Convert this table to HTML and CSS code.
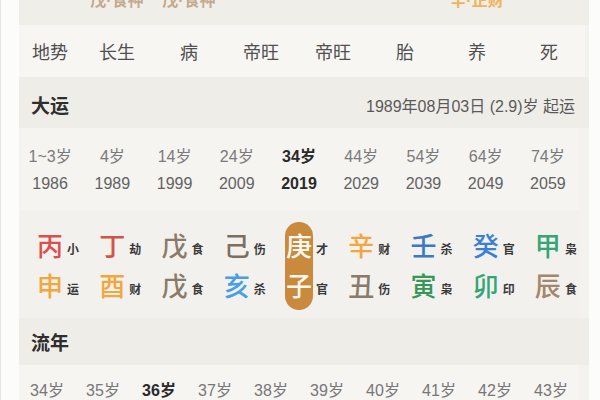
FILE: index.html
```html
<!DOCTYPE html>
<html lang="zh">
<head>
<meta charset="utf-8">
<link rel="stylesheet" href="styles.css">
</head>
<body>
<div class="page">
  <div class="panel">
    <div class="top">
      <div class="grid8 topline">
        <span></span><span class="c-tan">戊·食神</span><span class="c-tan">戊·食神</span><span></span><span></span><span></span><span class="c-gold">辛·正财</span><span></span>
      </div>
    </div>
    <div class="dishi grid8">
      <span>地势</span><span>长生</span><span>病</span><span>帝旺</span><span>帝旺</span><span>胎</span><span>养</span><span>死</span>
    </div>
    <div class="head head-dayun">
      <span class="title">大运</span>
      <span class="qiyun">1989年08月03日 (2.9)岁 起运</span>
    </div>
    <div class="years grid9">
      <div class="yc"><span class="age">1~3岁</span><span class="yr">1986</span></div>
      <div class="yc"><span class="age">4岁</span><span class="yr">1989</span></div>
      <div class="yc"><span class="age">14岁</span><span class="yr">1999</span></div>
      <div class="yc"><span class="age">24岁</span><span class="yr">2009</span></div>
      <div class="yc cur"><span class="age">34岁</span><span class="yr">2019</span></div>
      <div class="yc"><span class="age">44岁</span><span class="yr">2029</span></div>
      <div class="yc"><span class="age">54岁</span><span class="yr">2039</span></div>
      <div class="yc"><span class="age">64岁</span><span class="yr">2049</span></div>
      <div class="yc"><span class="age">74岁</span><span class="yr">2059</span></div>
    </div>
    <div class="ganzhi grid9">
      <div class="pillar"><div class="bigs"><span class="red">丙</span><span class="gold">申</span></div><div class="subs"><span>小</span><span>运</span></div></div>
      <div class="pillar"><div class="bigs"><span class="red2">丁</span><span class="gold">酉</span></div><div class="subs"><span>劫</span><span>财</span></div></div>
      <div class="pillar"><div class="bigs"><span class="brown">戊</span><span class="brown">戊</span></div><div class="subs"><span>食</span><span>食</span></div></div>
      <div class="pillar"><div class="bigs"><span class="brown2">己</span><span class="sky">亥</span></div><div class="subs"><span>伤</span><span>杀</span></div></div>
      <div class="pillar"><div class="bigs active"><span>庚</span><span>子</span></div><div class="subs"><span>才</span><span>官</span></div></div>
      <div class="pillar"><div class="bigs"><span class="gold">辛</span><span class="brown">丑</span></div><div class="subs"><span>财</span><span>伤</span></div></div>
      <div class="pillar"><div class="bigs"><span class="blue">壬</span><span class="green">寅</span></div><div class="subs"><span>杀</span><span>枭</span></div></div>
      <div class="pillar"><div class="bigs"><span class="blue2">癸</span><span class="green2">卯</span></div><div class="subs"><span>官</span><span>印</span></div></div>
      <div class="pillar"><div class="bigs"><span class="green2">甲</span><span class="tan">辰</span></div><div class="subs"><span>枭</span><span>食</span></div></div>
    </div>
    <div class="head head-liunian">
      <span class="title">流年</span>
    </div>
    <div class="liunian grid10">
      <span>34岁</span><span>35岁</span><span class="cur">36岁</span><span>37岁</span><span>38岁</span><span>39岁</span><span>40岁</span><span>41岁</span><span>42岁</span><span>43岁</span>
    </div>
  </div>
</div>
</body>
</html>
```

FILE: styles.css
```css
html, body {
  margin: 0;
  padding: 0;
  background: #fcfcfb;
  font-family: "Liberation Sans", "Noto Sans CJK SC", sans-serif;
}
.page {
  width: 600px;
  height: 400px;
  overflow: hidden;
  padding-left: 18px;
  box-sizing: border-box;
  border-left: 1px solid #e4e4e2;
}
.panel {
  width: 570px;
  height: 400px;
  overflow: hidden;
  background: #f3f2ee;
}
.grid8 {
  display: grid;
  grid-template-columns: 62px repeat(7, 1fr);
  width: 566px;
}
.grid9 {
  display: grid;
  grid-template-columns: repeat(9, 1fr);
  width: 560px;
}
.grid10 {
  display: grid;
  grid-template-columns: repeat(10, 1fr);
  width: 560px;
}
.grid8 > span, .grid10 > span {
  text-align: center;
}

/* top cut-off strip */
.top {
  height: 25px;
  overflow: hidden;
  background: #f0eee9;
}
.topline {
  margin-top: -8px;
  font-size: 16px;
  line-height: 18px;
  font-weight: bold;
}
.c-tan { color: #c4aa8e; }
.c-gold { color: #efb35c; }

/* 地势 row */
.dishi {
  height: 52px;
  align-items: center;
  background: #f7f6f3;
  font-size: 18px;
  color: #505050;
}

/* section headers */
.head {
  display: flex;
  align-items: center;
  justify-content: space-between;
  padding: 0 14px 0 12px;
  background: #efede8;
}
.head-dayun {
  height: 51px;
  padding-top: 4px;
  box-sizing: border-box;
}
.head-liunian {
  height: 47px;
}
.title {
  font-size: 19px;
  font-weight: bold;
  color: #2e2e2e;
}
.qiyun {
  font-size: 16px;
  color: #5a5a5a;
}

/* years */
.years {
  padding: 15px 0 13px;
  background: #f5f4f1;
}
.yc {
  display: flex;
  flex-direction: column;
  align-items: center;
  font-size: 16px;
  line-height: 27px;
}
.age { color: #7a7a7a; }
.yr { color: #626262; }
.yc.cur .age, .yc.cur .yr { color: #2a2a2a; font-weight: bold; }

/* ganzhi */
.ganzhi {
  height: 108px;
  background: #f3f1ed;
  align-items: start;
}
.pillar {
  display: grid;
  grid-template-columns: 1fr 28px 1fr;
  margin-top: 12px;
}
.bigs {
  grid-column: 2;
  display: flex;
  flex-direction: column;
  align-items: center;
  padding: 3px 0 5px;
  border-radius: 14px;
  font-size: 26px;
  line-height: 40px;
  font-family: "Noto Sans CJK SC", sans-serif;
  font-weight: 500;
}
.bigs.active {
  background: #c98a3e;
  color: #fff8ee;
}
.subs {
  grid-column: 3;
  display: flex;
  flex-direction: column;
  padding: 3px 0 5px 3px;
  font-size: 12px;
  font-weight: bold;
  color: #3a3a3a;
  font-family: "Noto Sans CJK SC", sans-serif;
}
.subs span {
  height: 40px;
  line-height: 48px;
}
.red { color: #d9514f; }
.red2 { color: #d35446; }
.gold { color: #f2a73e; }
.brown { color: #8a7a68; }
.brown2 { color: #7d6f60; }
.sky { color: #47a0e2; }
.blue { color: #3b78c6; }
.blue2 { color: #3b80d8; }
.green { color: #379758; }
.green2 { color: #36a575; }
.tan { color: #a3876a; }

/* liunian */
.liunian {
  padding-top: 14px;
  background: #f6f5f2;
  height: 60px;
  font-size: 16px;
  line-height: 24px;
  color: #777777;
}
.liunian .cur {
  color: #2a2a2a;
  font-weight: bold;
}
```
